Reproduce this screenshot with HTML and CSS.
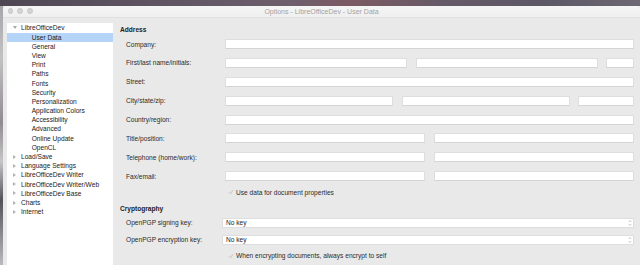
FILE: index.html
```html
<!DOCTYPE html>
<html lang="en">
<head>
    <meta charset="UTF-8">
    <title>Options - LibreOfficeDev - User Data</title>
    <link rel="stylesheet" href="styles.css">
</head>
<body>
    <div class="desktop-top"></div>
    <div class="screen">
        <div class="desktop-left"></div>
        <div class="window">
            <div class="titlebar">
                <div class="lights"><span></span><span></span><span></span></div>
                <div class="title">Options - LibreOfficeDev - User Data</div>
            </div>
            <div class="content">
                <ul class="tree">
                    <li class="node open"><i class="arrow down"></i>LibreOfficeDev</li>
                    <li class="leaf selected">User Data</li>
                    <li class="leaf">General</li>
                    <li class="leaf">View</li>
                    <li class="leaf">Print</li>
                    <li class="leaf">Paths</li>
                    <li class="leaf">Fonts</li>
                    <li class="leaf">Security</li>
                    <li class="leaf">Personalization</li>
                    <li class="leaf">Application Colors</li>
                    <li class="leaf">Accessibility</li>
                    <li class="leaf">Advanced</li>
                    <li class="leaf">Online Update</li>
                    <li class="leaf">OpenCL</li>
                    <li class="node"><i class="arrow right"></i>Load/Save</li>
                    <li class="node"><i class="arrow right"></i>Language Settings</li>
                    <li class="node"><i class="arrow right"></i>LibreOfficeDev Writer</li>
                    <li class="node"><i class="arrow right"></i>LibreOfficeDev Writer/Web</li>
                    <li class="node"><i class="arrow right"></i>LibreOfficeDev Base</li>
                    <li class="node"><i class="arrow right"></i>Charts</li>
                    <li class="node"><i class="arrow right"></i>Internet</li>
                </ul>

                <div class="page">
                    <div class="section">Address</div>
                    <div class="address">
                        <div class="row">
                            <label>Company:</label>
                            <div class="fields"><span class="field grow"></span></div>
                        </div>
                        <div class="row">
                            <label>First/last name/initials:</label>
                            <div class="fields">
                                <span class="field w-name"></span>
                                <span class="field w-name"></span>
                                <span class="field grow"></span>
                            </div>
                        </div>
                        <div class="row">
                            <label>Street:</label>
                            <div class="fields"><span class="field grow"></span></div>
                        </div>
                        <div class="row">
                            <label>City/state/zip:</label>
                            <div class="fields">
                                <span class="field w-city"></span>
                                <span class="field w-city"></span>
                                <span class="field grow"></span>
                            </div>
                        </div>
                        <div class="row">
                            <label>Country/region:</label>
                            <div class="fields"><span class="field grow"></span></div>
                        </div>
                        <div class="row">
                            <label>Title/position:</label>
                            <div class="fields">
                                <span class="field w-half"></span>
                                <span class="field grow"></span>
                            </div>
                        </div>
                        <div class="row">
                            <label>Telephone (home/work):</label>
                            <div class="fields">
                                <span class="field w-half"></span>
                                <span class="field grow"></span>
                            </div>
                        </div>
                        <div class="row">
                            <label>Fax/email:</label>
                            <div class="fields">
                                <span class="field w-half"></span>
                                <span class="field grow"></span>
                            </div>
                        </div>
                    </div>
                    <div class="check first-check">
                        <svg class="tick" viewBox="0 0 6 6"><path d="M1 3.3 L2.4 4.8 L5 1.2" fill="none" stroke="#b9b9b9" stroke-width="0.8"/></svg>
                        <span>Use data for document properties</span>
                    </div>

                    <div class="section crypto-title">Cryptography</div>
                    <div class="crypto">
                        <div class="row">
                            <label>OpenPGP signing key:</label>
                            <div class="combo">No key
                                <svg class="spin" viewBox="0 0 4 8"><path d="M0.7 3 L2 1.5 L3.3 3 M0.7 5 L2 6.5 L3.3 5" fill="none" stroke="#a8a8a8" stroke-width="0.6"/></svg>
                            </div>
                        </div>
                        <div class="row">
                            <label>OpenPGP encryption key:</label>
                            <div class="combo">No key
                                <svg class="spin" viewBox="0 0 4 8"><path d="M0.7 3 L2 1.5 L3.3 3 M0.7 5 L2 6.5 L3.3 5" fill="none" stroke="#a8a8a8" stroke-width="0.6"/></svg>
                            </div>
                        </div>
                    </div>
                    <div class="check last-check">
                        <svg class="tick" viewBox="0 0 6 6"><path d="M1 3.3 L2.4 4.8 L5 1.2" fill="none" stroke="#b9b9b9" stroke-width="0.8"/></svg>
                        <span>When encrypting documents, always encrypt to self</span>
                    </div>
                </div>
            </div>
        </div>
    </div>
</body>
</html>
```

FILE: styles.css
```css
html, body {
    margin: 0;
    padding: 0;
    height: 100%;
    overflow: hidden;
}
body {
    font-family: 'Liberation Sans', Arial, sans-serif;
    font-size: 6.6px;
    line-height: 9px;
    color: #2b2b2b;
    background: #e9e9e9;
}
.desktop-top {
    height: 6px;
    background: linear-gradient(90deg, #4f4753 0%, #5f5563 25%, #6e5e6c 45%, #7c5a63 55%, #655a68 70%, #5d5866 85%, #6d6872 100%);
}
.screen {
    display: flex;
    height: 259px;
}
.desktop-left {
    width: 3px;
    flex: 0 0 3px;
    background: linear-gradient(180deg, #a9a6ab 0%, #c4c1c5 20%, #8f8b90 45%, #c7c4c8 60%, #55525a 75%, #bdbabe 100%);
}
.window {
    flex: 1;
    background: #e9e9e9;
    border-top-left-radius: 4px;
    border-top-right-radius: 4px;
    overflow: hidden;
}
.titlebar {
    height: 11.5px;
    background: linear-gradient(180deg, #f6f6f6, #efefef);
    border-bottom: 1px solid #e0e0e0;
    box-sizing: border-box;
    display: flex;
    align-items: center;
    position: relative;
}
.lights {
    display: flex;
    gap: 4.3px;
    padding-left: 4.5px;
}
.lights span {
    width: 5.7px;
    height: 5.7px;
    border-radius: 50%;
    background: #d3d3d3;
    border: 0.5px solid #c7c7c7;
    box-sizing: border-box;
}
.title {
    position: absolute;
    left: 0;
    right: 0;
    text-align: center;
    font-size: 7px;
    color: #a3a3a3;
}
.content {
    display: flex;
    gap: 7px;
}
.tree {
    list-style: none;
    margin: 5.2px 0 0 4px;
    padding: 0.7px 0 0 0;
    width: 106px;
    height: 250px;
    background: #fff;
    color: #222;
}
.tree li {
    height: 9.2px;
    line-height: 9.2px;
    white-space: nowrap;
    display: flex;
    align-items: center;
}
.node {
    padding-left: 14px;
    position: relative;
}
.leaf {
    padding-left: 24.7px;
}
.selected {
    background: #b4d5f8;
}
.arrow {
    position: absolute;
    left: 5.5px;
    top: 3px;
    width: 0;
    height: 0;
}
.arrow.down {
    border-left: 2px solid transparent;
    border-right: 2px solid transparent;
    border-top: 3px solid #a8a8a8;
}
.arrow.right {
    top: 2.6px;
    border-top: 2px solid transparent;
    border-bottom: 2px solid transparent;
    border-left: 3px solid #b3b3b3;
}
.page {
    width: 514px;
    padding-top: 7px;
}
.section {
    font-weight: bold;
    color: #222;
}
.address {
    margin-top: 5.5px;
    display: flex;
    flex-direction: column;
    gap: 8.9px;
}
.row {
    display: grid;
    grid-template-columns: 105px 1fr;
    align-items: center;
    height: 10px;
}
.row label {
    padding-left: 6px;
    white-space: nowrap;
}
.fields {
    display: flex;
    gap: 8.6px;
}
.field {
    height: 10px;
    background: #fff;
    box-sizing: border-box;
    border: 0.5px solid #dedede;
    border-bottom-color: #d4d4d4;
}
.grow { flex: 1; }
.w-name { flex: 0 0 182px; }
.w-city { flex: 0 0 168px; }
.w-half { flex: 0 0 200px; }
.check {
    display: flex;
    align-items: center;
    padding-left: 108px;
    gap: 2px;
}
.first-check { margin-top: 6.5px; }
.last-check { margin-top: 6.7px; }
.tick {
    width: 6px;
    height: 6px;
}
.crypto-title { margin-top: 7px; }
.crypto {
    margin-top: 5px;
    display: flex;
    flex-direction: column;
    gap: 7px;
}
.crypto .row {
    grid-template-columns: 102px 1fr;
}
.combo {
    height: 10px;
    line-height: 10px;
    background: #fff;
    box-sizing: border-box;
    border: 0.5px solid #dedede;
    padding-left: 3px;
    display: flex;
    justify-content: space-between;
    align-items: center;
    color: #1e1e1e;
}
.spin {
    width: 4px;
    height: 8px;
    margin-right: 1.5px;
}
```
